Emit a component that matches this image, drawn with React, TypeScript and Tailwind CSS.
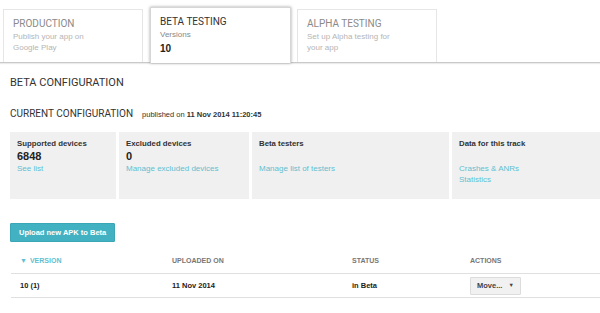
import { ReactNode } from "react";

const Tab = ({ title, active, children, width }: { title: string; active?: boolean; children: ReactNode; width: string }) => {
  return (
    <div
      className={`${width} shrink-0 px-[9px] pt-[7px] border border-b-0 ${
        active
          ? "h-[56px] -mb-px bg-white border-[#d6d6d6] shadow-[0_0_3px_rgba(0,0,0,0.35)] relative z-10"
          : "h-[53px] border-[#e6e6e6]"
      }`}
    >
      <div className={`font-['Roboto',sans-serif] text-[10px] leading-[13px] ${active ? "text-[#333]" : "text-[#8a8a8a]"}`}>{title}</div>
      {children}
    </div>
  );
};

const Card = ({ title, value, links }: { title: string; value?: string; links: string[] }) => {
  return (
    <div className="bg-[#f0f0f0] h-[67px] px-[7px] pt-[6px]">
      <div className="text-[7.8px] leading-[11px] font-bold text-[#333]">{title}</div>
      <div className="text-[11px] leading-[14px] font-bold text-[#222] h-[14px]">{value}</div>
      {links.map((l) => (
        <div key={l} className="text-[8px] leading-[11px] text-[#5fbfd1]">{l}</div>
      ))}
    </div>
  );
};

export default function App() {
  return (
    <div className="w-[600px] h-[313px] overflow-hidden bg-white font-['Liberation_Sans',Arial,sans-serif]">
      {/* Track tabs */}
      <div className="flex items-end pt-[7px] pl-[3px] border-b border-[#c9c9c9] shadow-[0_1px_1px_rgba(0,0,0,0.08)]">
        <Tab title="PRODUCTION" width="w-[140px]">
          <div className="text-[8px] leading-[11px] text-[#b5b5b5] mt-[1px]">Publish your app on</div>
          <div className="text-[8px] leading-[11px] text-[#b5b5b5]">Google Play</div>
        </Tab>
        <div className="w-[7px] shrink-0" />
        <Tab title="BETA TESTING" width="w-[141px]" active>
          <div className="text-[8px] leading-[11px] text-[#888] mt-[1px]">Versions</div>
          <div className="text-[10px] leading-[15px] font-bold text-[#222] mt-[1px]">10</div>
        </Tab>
        <div className="w-[6px] shrink-0" />
        <Tab title="ALPHA TESTING" width="w-[140px]">
          <div className="text-[8px] leading-[11px] text-[#b5b5b5] mt-[1px]">Set up Alpha testing for</div>
          <div className="text-[8px] leading-[11px] text-[#b5b5b5]">your app</div>
        </Tab>
      </div>

      <div className="pl-[10px]">
        <div className="mt-[13px] font-['Roboto',sans-serif] text-[11px] leading-[14px] text-[#333]">BETA CONFIGURATION</div>

        <div className="mt-[17px] flex items-baseline gap-[9px] h-[14px]">
          <span className="font-['Roboto',sans-serif] text-[10px] leading-[14px] text-[#333]">CURRENT CONFIGURATION</span>
          <span className="text-[7.5px] text-[#333]">
            published on <b>11 Nov 2014 11:20:45</b>
          </span>
        </div>

        <div className="mt-[11px] grid grid-cols-[106px_130px_197px_1fr] gap-[3px]">
          <Card title="Supported devices" value="6848" links={["See list"]} />
          <Card title="Excluded devices" value="0" links={["Manage excluded devices"]} />
          <Card title="Beta testers" links={["Manage list of testers"]} />
          <Card title="Data for this track" links={["Crashes & ANRs", "Statistics"]} />
        </div>

        <button className="mt-[24px] h-[19px] px-[8px] rounded-[1px] bg-[#42b2c2] border border-[#3aa6b6] text-white text-[7.5px] font-bold leading-[17px]">
          Upload new APK to Beta
        </button>

        {/* APK table */}
        <div className="mt-[8px] ml-[1px]">
          <div className="grid grid-cols-[152px_180px_118px_1fr] h-[24px] items-center pl-[9px] border-b border-[#e0e0e0] text-[7px] font-bold text-[#777]">
            <div className="flex items-center gap-[3px] text-[#5fbfd1]">
              <span className="text-[7px]">▼</span>
              <span>VERSION</span>
            </div>
            <div>UPLOADED ON</div>
            <div>STATUS</div>
            <div>ACTIONS</div>
          </div>
          <div className="grid grid-cols-[152px_180px_118px_1fr] h-[24px] items-center pl-[9px] border-b border-[#e0e0e0] text-[7.5px] font-bold text-[#222]">
            <div>10 (1)</div>
            <div>11 Nov 2014</div>
            <div>in Beta</div>
            <div>
              <span className="inline-flex items-center gap-[6px] h-[18px] px-[6px] bg-[#f1f1f1] border border-[#dcdcdc] rounded-[1px] text-[#444]">
                Move...
                <span className="text-[5.5px]">▼</span>
              </span>
            </div>
          </div>
        </div>
      </div>
    </div>
  );
}
